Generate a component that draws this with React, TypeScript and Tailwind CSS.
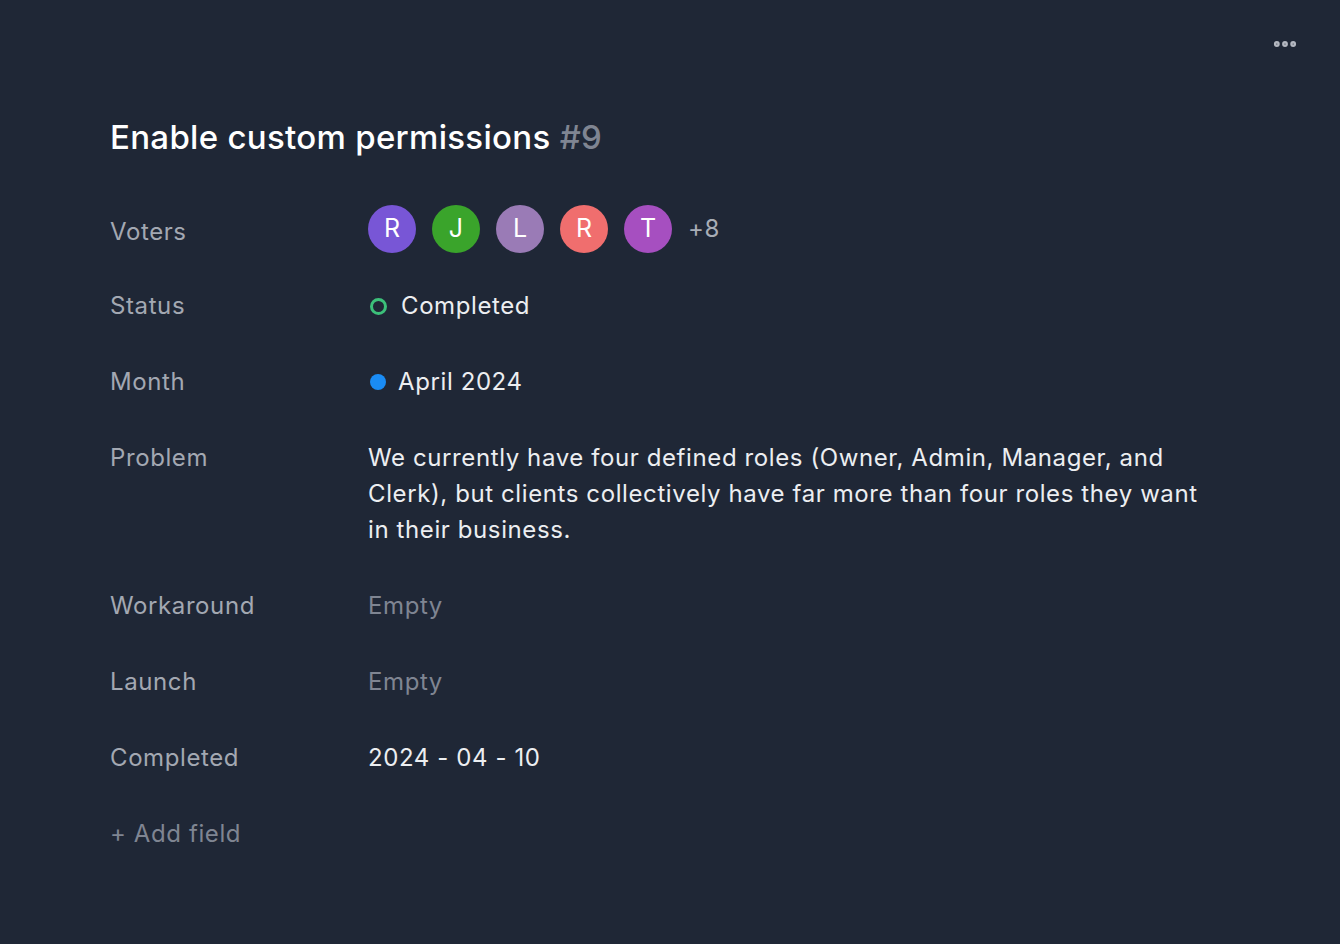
import { MoreHorizontal } from "lucide-react";

const voters = [
    { letter: 'R', color: 'bg-[#7856d6]' },
    { letter: 'J', color: 'bg-[#3aa42b]' },
    { letter: 'L', color: 'bg-[#9a7bb6]' },
    { letter: 'R', color: 'bg-[#f06e6e]' },
    { letter: 'T', color: 'bg-[#a64fc0]' },
];

function Row({ label, children }: { label: string; children: React.ReactNode }) {
    return (
        <div className="grid grid-cols-[258px_1fr] items-start">
            <div className="text-[24px] leading-[36px] tracking-[0.6px] text-[#a3a8b2]">{label}</div>
            <div className="text-[24px] leading-[36px] tracking-[0.6px] text-[#eceef1]">{children}</div>
        </div>
    );
}

export default function App() {
    return (
        <div className="min-h-[944px] bg-[#1f2736] relative" style={{ fontFamily: 'Inter, "Noto Sans", sans-serif' }}>
            <button className="absolute right-[41px] top-[30px] text-[#b3b7c0]" title="More">
                <MoreHorizontal size={28} strokeWidth={3} />
            </button>

            <div className="pl-[110px] pt-[116px]">
                <h1 className="text-[33px] leading-[42px] font-medium text-white tracking-[0.3px]">
                    Enable custom permissions <span className="text-[#7f8592]">#9</span>
                </h1>

                <div className="mt-[47px] grid grid-cols-[258px_1fr] items-center">
                    <div className="text-[24px] leading-[36px] tracking-[0.6px] text-[#a3a8b2] pt-[5px]">Voters</div>
                    <div className="flex items-center gap-4">
                        {voters.map((v, i) => (
                            <div key={i} className={`${v.color} w-12 h-12 rounded-full flex items-center justify-center text-white text-[25px]`}>
                                {v.letter}
                            </div>
                        ))}
                        <span className="text-[24px] tracking-[0.6px] text-[#a8adb6]">+8</span>
                    </div>
                </div>

                <div className="mt-[35px] flex flex-col gap-10">
                    <Row label="Status">
                        <div className="flex items-center gap-[14px] pl-[2px]">
                            <span className="w-[17px] h-[17px] rounded-full border-[3.5px] border-[#3cc07a]"></span>
                            Completed
                        </div>
                    </Row>

                    <Row label="Month">
                        <div className="flex items-center gap-[12px] pl-[2px]">
                            <span className="w-4 h-4 rounded-full bg-[#1a8cf5]"></span>
                            April 2024
                        </div>
                    </Row>

                    <Row label="Problem">
                        <p className="max-w-[836px]">
                            We currently have four defined roles (Owner, Admin, Manager, and Clerk), but clients collectively have far more than four roles they want in their business.
                        </p>
                    </Row>

                    <Row label="Workaround">
                        <span className="text-[#7f8592]">Empty</span>
                    </Row>

                    <Row label="Launch">
                        <span className="text-[#7f8592]">Empty</span>
                    </Row>

                    <Row label="Completed">2024 - 04 - 10</Row>

                    <div className="text-[24px] leading-[36px] tracking-[0.6px] text-[#7f8592]">+ Add field</div>
                </div>
            </div>
        </div>
    );
}
